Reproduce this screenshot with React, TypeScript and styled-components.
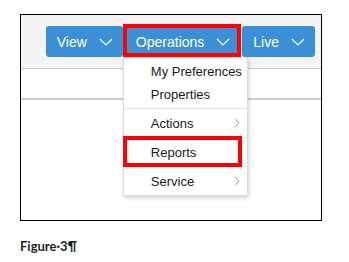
import React from "react";
import styled, { createGlobalStyle } from "styled-components";

const GlobalStyle = createGlobalStyle`
  body {
    margin: 0;
    background: #fff;
    font-family: "Liberation Sans", Arial, sans-serif;
  }
`;

const Page = styled.div`
  padding: 14px 0 0 20px;
`;

const Frame = styled.div`
  width: 302px;
  height: 207px;
  box-sizing: border-box;
  border: 1px solid #000;
  background: #fff;
`;

const Toolbar = styled.div`
  height: 54px;
  box-sizing: border-box;
  background: #f4f4f4;
  border-bottom: 1px solid #cfcfcf;
  display: flex;
  justify-content: flex-end;
  align-items: flex-start;
  gap: 2px;
  padding: 11px 6px 0 0;
`;

const Slot = styled.div`
  position: relative;
`;

const NavButton = styled.button`
  height: 31px;
  display: flex;
  align-items: center;
  gap: 12px;
  padding: 0 10px 0 11px;
  border: none;
  border-radius: 3px;
  background: #3b8fd6;
  color: #fff;
  font-family: "Liberation Sans", Arial, sans-serif;
  font-size: 14px;
`;

const Highlight = styled.div<{ $top: number; $left: number; $right: number; $bottom: number }>`
  position: absolute;
  top: ${(p) => p.$top}px;
  left: ${(p) => p.$left}px;
  right: ${(p) => p.$right}px;
  bottom: ${(p) => p.$bottom}px;
  border: 4px solid #f00;
  pointer-events: none;
  z-index: 3;
`;

const Divider = styled.div`
  margin-top: 29px;
  border-top: 2px solid #cdcdcd;
`;

const Menu = styled.div`
  position: absolute;
  top: 31px;
  left: -2px;
  width: 125px;
  box-sizing: border-box;
  background: #fff;
  border: 1px solid #dcdcdc;
  box-shadow: 1px 2px 4px rgba(0, 0, 0, 0.18);
  z-index: 2;
`;

const MenuGroup = styled.div`
  padding: 2px 0 2px;
`;

const MenuItem = styled.div<{ $tall?: boolean }>`
  position: relative;
  height: ${(p) => (p.$tall ? 28 : 23)}px;
  display: flex;
  align-items: center;
  justify-content: space-between;
  padding: 0 7px 0 27px;
  font-size: 13px;
  color: #1a1a1a;
  white-space: nowrap;
  border-top: ${(p) => (p.$tall ? "1px solid #e2e2e2" : "none")};
`;

const Caption = styled.div`
  margin-top: 17px;
  font-family: Lato, "Open Sans", sans-serif;
  font-weight: 700;
  font-size: 13px;
  color: #1f1f1f;
`;

const Chevron = () => (
  <svg width="14" height="8" viewBox="0 0 14 8">
    <polyline points="1,1 7,7 13,1" fill="none" stroke="#fff" strokeWidth="1.2" />
  </svg>
);

const Arrow = () => (
  <svg width="6" height="10" viewBox="0 0 6 10">
    <polyline points="1,1 5,5 1,9" fill="none" stroke="#999" strokeWidth="1" />
  </svg>
);

export default function App() {
  return (
    <>
      <GlobalStyle />
      <Page>
        <Frame>
          <Toolbar>
            <Slot>
              <NavButton>
                View <Chevron />
              </NavButton>
            </Slot>
            <Slot>
              <NavButton>
                Operations <Chevron />
              </NavButton>
              <Highlight $top={-2} $left={-2} $right={-1} $bottom={0} />
              <Menu>
                <MenuGroup>
                  <MenuItem>My Preferences</MenuItem>
                  <MenuItem>Properties</MenuItem>
                </MenuGroup>
                <MenuItem $tall>
                  Actions <Arrow />
                </MenuItem>
                <MenuItem $tall>
                  Reports
                  <Highlight $top={-2} $left={-1} $right={5} $bottom={-1} />
                </MenuItem>
                <MenuItem $tall>
                  Service <Arrow />
                </MenuItem>
              </Menu>
            </Slot>
            <Slot>
              <NavButton>
                Live <Chevron />
              </NavButton>
            </Slot>
          </Toolbar>
          <Divider />
        </Frame>
        <Caption>Figure·3¶</Caption>
      </Page>
    </>
  );
}
